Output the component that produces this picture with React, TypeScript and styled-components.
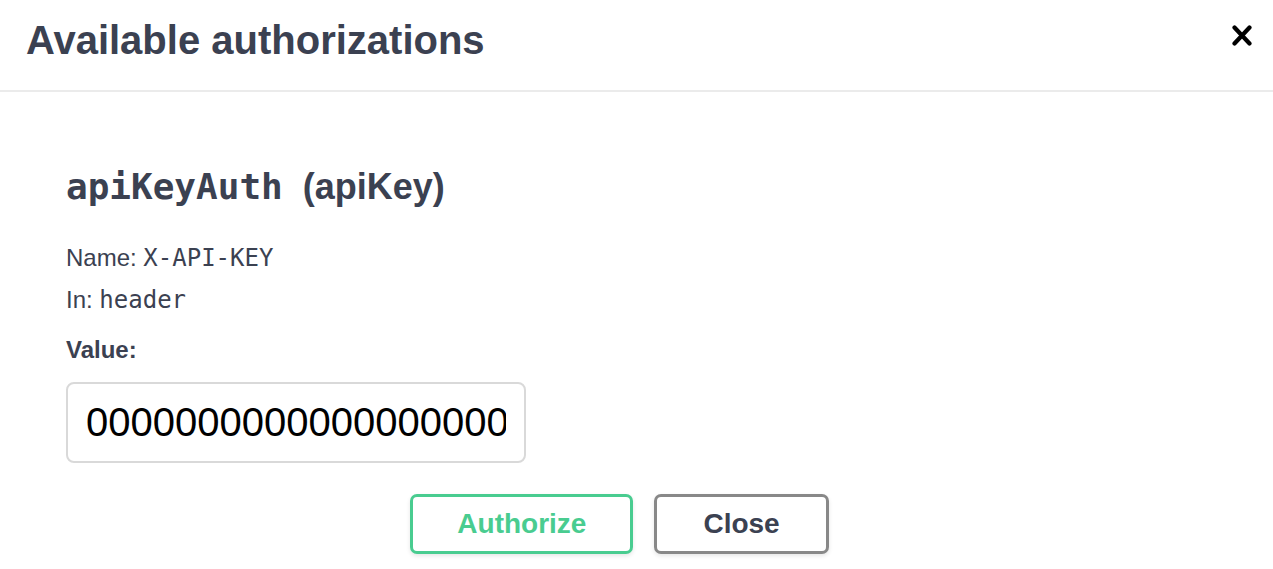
import React from "react";
import styled, { createGlobalStyle } from "styled-components";

const GlobalStyle = createGlobalStyle`
  html, body { margin: 0; padding: 0; background: #ffffff; }
  body { font-family: "Liberation Sans", Arial, sans-serif; color: #3b4151; }
  * { box-sizing: border-box; }
`;

const Modal = styled.div`
  width: 1273px;
  height: 569px;
  background: #ffffff;
  overflow: hidden;
  display: flex;
  flex-direction: column;
`;

const Header = styled.div`
  height: 92px;
  padding: 18px 20px 0 26px;
  border-bottom: 2px solid #ebebeb;
  display: flex;
  justify-content: space-between;
  align-items: flex-start;
`;

const Title = styled.h3`
  margin: 0;
  font-family: "Liberation Sans", Arial, sans-serif;
  font-size: 40px;
  font-weight: 700;
  color: #3b4151;
`;

const CloseIcon = styled.button`
  margin-top: 6px;
  width: 22px;
  height: 22px;
  padding: 0;
  border: none;
  background: transparent;
  display: flex;
  align-items: center;
  justify-content: center;
  cursor: pointer;
`;

const Content = styled.div`
  padding: 74px 0 0 66px;
  display: flex;
  flex-direction: column;
`;

const SchemeTitle = styled.h4`
  margin: 0;
  font-family: "Liberation Sans", Arial, sans-serif;
  font-size: 36px;
  font-weight: 700;
  color: #3b4151;
  white-space: nowrap;
`;

const Code = styled.code<{ $size: number; $bold?: boolean }>`
  font-family: "DejaVu Sans Mono", "Liberation Mono", monospace;
  font-size: ${(p) => p.$size}px;
  font-weight: ${(p) => (p.$bold ? 700 : 400)};
  color: #3b4151;
`;

const Spacer = styled.span`
  display: inline-block;
  width: 20px;
`;

const InfoRow = styled.p`
  margin: 0;
  font-size: 24px;
  line-height: 41px;
  color: #3b4151;
`;

const InfoList = styled.div`
  margin-top: 29px;
  display: flex;
  flex-direction: column;
`;

const Label = styled.label`
  margin-top: 15px;
  font-size: 24px;
  font-weight: 700;
  color: #3b4151;
`;

const ValueInput = styled.input`
  margin-top: 18px;
  width: 460px;
  height: 81px;
  padding: 0 18px;
  border: 2px solid #d9d9d9;
  border-radius: 8px;
  font-family: "Liberation Sans", Arial, sans-serif;
  font-size: 40px;
  color: #000000;
  background: #ffffff;
  outline: none;
`;

const ButtonRow = styled.div`
  margin: 31px 0 0 -66px;
  padding-right: 34px;
  display: flex;
  justify-content: center;
  gap: 21px;
`;

const Button = styled.button<{ $variant: "authorize" | "close" }>`
  height: 60px;
  padding: 0 ${(p) => (p.$variant === "authorize" ? 44 : 46)}px;
  border: 3px solid ${(p) => (p.$variant === "authorize" ? "#49cc90" : "#888888")};
  border-radius: 7px;
  background: #ffffff;
  box-shadow: 0 2px 4px rgba(0, 0, 0, 0.1);
  font-family: "Liberation Sans", Arial, sans-serif;
  font-size: 28px;
  font-weight: 700;
  color: ${(p) => (p.$variant === "authorize" ? "#49cc90" : "#3b4151")};
  cursor: pointer;
`;

export default function App() {
  return (
    <>
      <GlobalStyle />
      <Modal>
        <Header>
          <Title>Available authorizations</Title>
          <CloseIcon aria-label="Close">
            <svg width="20" height="21" viewBox="0 0 20 21">
              <path d="M2.5 2.5 L17.5 18.5 M17.5 2.5 L2.5 18.5" stroke="#000" strokeWidth="4.2" strokeLinecap="round" fill="none" />
            </svg>
          </CloseIcon>
        </Header>
        <Content>
          <SchemeTitle>
            <Code $size={36} $bold>apiKeyAuth</Code>
            <Spacer />(apiKey)
          </SchemeTitle>
          <InfoList>
            <InfoRow>
              Name: <Code $size={24}>X-API-KEY</Code>
            </InfoRow>
            <InfoRow>
              In: <Code $size={24}>header</Code>
            </InfoRow>
          </InfoList>
          <Label>Value:</Label>
          <ValueInput readOnly value="0000000000000000000000000000000000000000" />
          <ButtonRow>
            <Button $variant="authorize">Authorize</Button>
            <Button $variant="close">Close</Button>
          </ButtonRow>
        </Content>
      </Modal>
    </>
  );
}
